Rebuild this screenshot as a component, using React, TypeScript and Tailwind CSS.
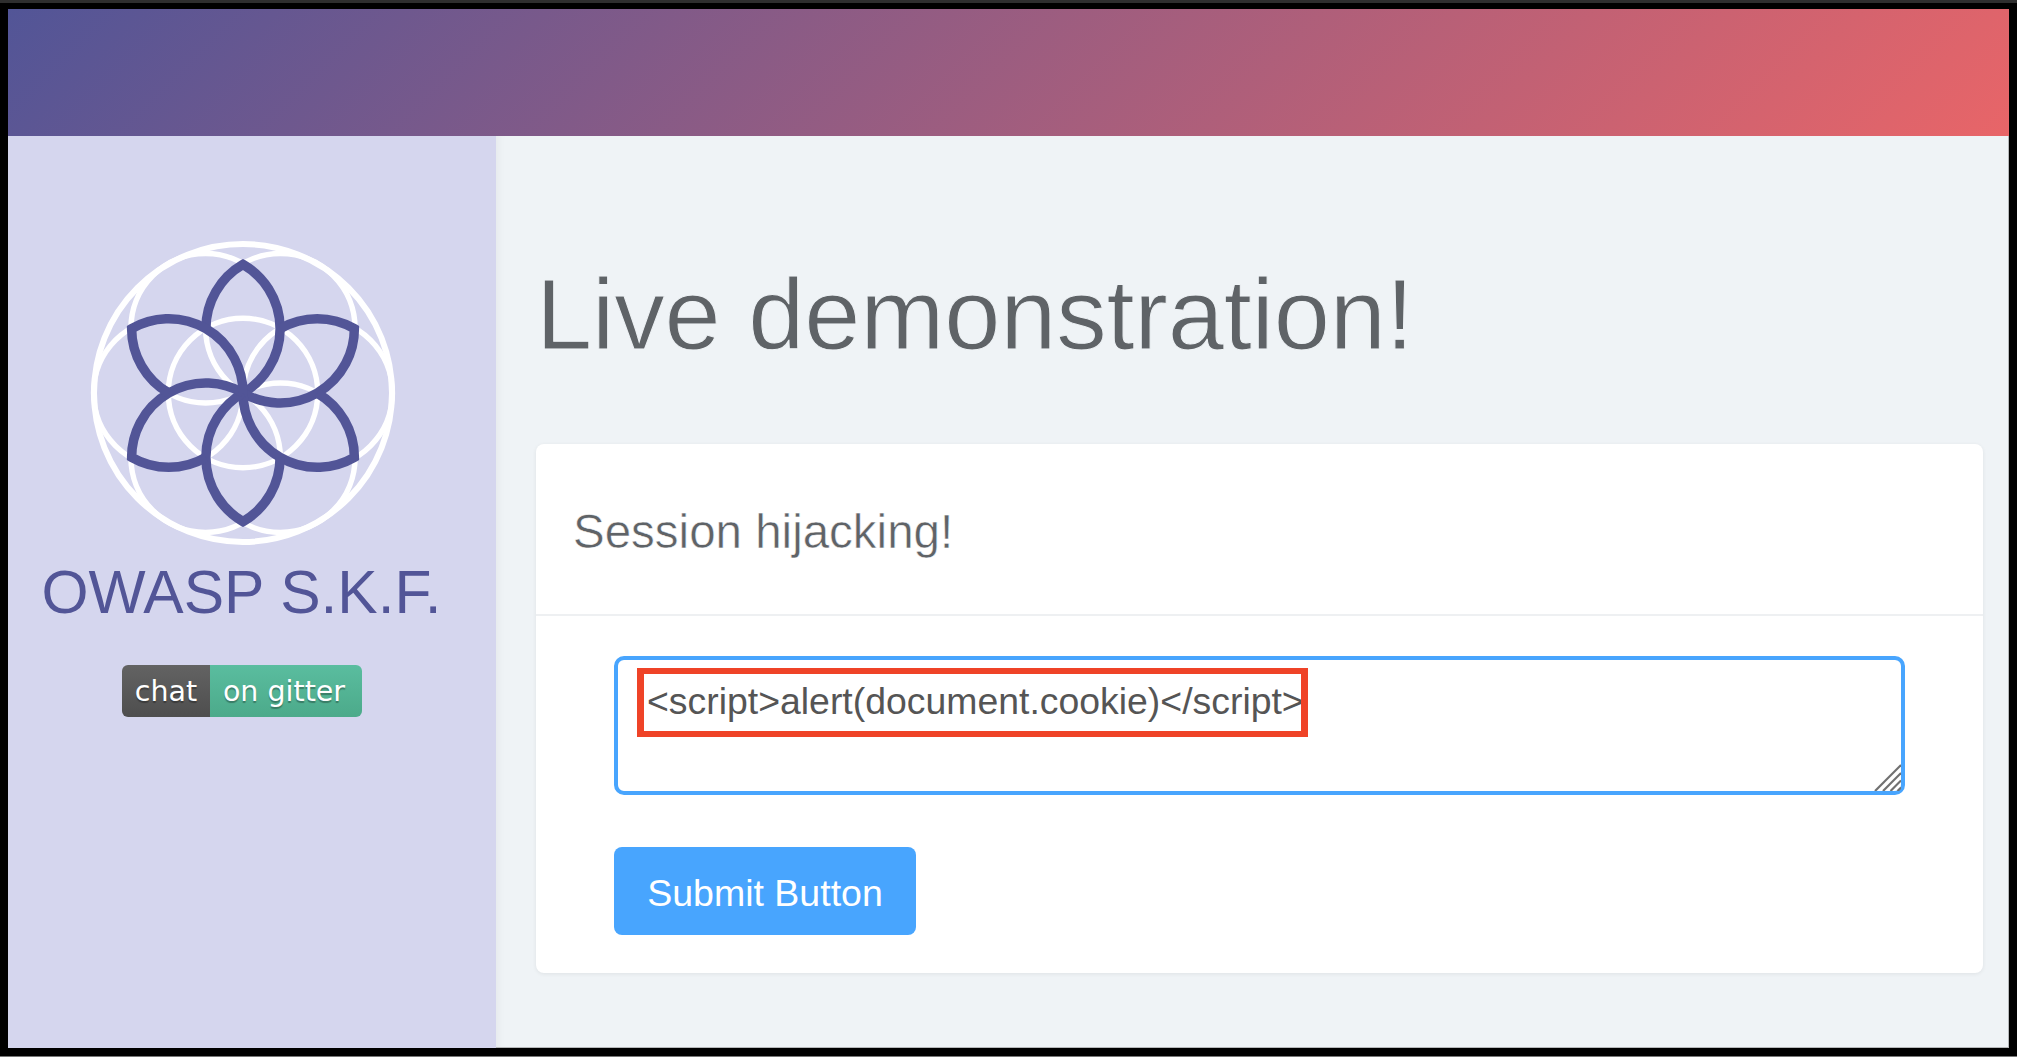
const PETAL = 'M-37.1 -64.3A74.25 74.25 0 0 1 0 -128.6A74.25 74.25 0 0 1 0 0';

const circles = [
  [0, 0],
  [74.7, 0],
  [37.35, 64.7],
  [-37.35, 64.7],
  [-74.7, 0],
  [-37.35, -64.7],
  [37.35, -64.7],
];

function Logo() {
  return (
    <svg width="320" height="320" viewBox="-160 -160 320 320" className="block">
      <g fill="none" stroke="#ffffff" strokeWidth="5.5">
        <circle cx="0" cy="0" r="149" strokeWidth="6" />
        {circles.map(([cx, cy]) => (
          <circle key={`${cx}-${cy}`} cx={cx} cy={cy} r="74.7" />
        ))}
      </g>
      <g fill="none" stroke="#525597" strokeWidth="9.5" strokeMiterlimit="10">
        {[0, 60, 120, 180, 240, 300].map((deg) => (
          <path key={deg} d={PETAL} transform={`rotate(${deg})`} />
        ))}
      </g>
    </svg>
  );
}

function GitterBadge() {
  return (
    <div className="flex h-[52px] w-[240px] overflow-hidden rounded-[6px] font-['DejaVu_Sans',sans-serif] text-[28.5px] leading-[53px] text-white [text-shadow:0_2px_1px_rgba(0,0,0,0.3)]">
      <div className="w-[88px] bg-gradient-to-b from-[#636363] to-[#4e4e4e] text-center">chat</div>
      <div className="flex-1 bg-gradient-to-b from-[#5abd9f] to-[#4caa8a] pr-[4px] text-center">on gitter</div>
    </div>
  );
}

export default function App() {
  return (
    <div className="flex h-[1057px] flex-col border-t-[3px] border-b border-t-[#2e2e2e] border-b-[#777777] bg-black pt-[6px] pr-[8px] pb-[8px] pl-[8px] font-['Liberation_Sans',sans-serif]">
      <header className="h-[127px] shrink-0 bg-[linear-gradient(135deg,#525597,#e86568)]" />

      <div className="flex min-h-0 flex-1">
        <aside className="flex w-[488px] shrink-0 flex-col items-center bg-[#d5d6ee] pt-[97px] pr-[18px]">
          <Logo />
          <div className="mt-[4px] pr-[3px] text-[60.5px] leading-[70px] whitespace-nowrap text-[#525597]">OWASP S.K.F.</div>
          <div className="mt-[38px] pr-[2px]">
            <GitterBadge />
          </div>
        </aside>

        <main className="flex-1 border-r border-b border-[#b5b7b9] bg-[#eff3f6] pt-[118px] pr-[25px] pl-[40px] shadow-[inset_12px_0_12px_-12px_rgba(0,0,0,0.06)]">
          <h1 className="text-[101px] leading-[120px] tracking-[-0.2px] text-[#5f6367] [-webkit-text-stroke:1px_#eff3f6]">Live demonstration!</h1>

          <section className="mt-[70px] h-[529px] rounded-[8px] bg-white shadow-[0_1px_4px_rgba(0,0,0,0.07)]">
            <div className="flex h-[172px] items-center border-b-2 border-[#eef0f2] pt-[5px] pr-[38px] pl-[37px] text-[47.5px] text-[#5f6367] [-webkit-text-stroke:0.5px_#ffffff]">
              Session hijacking!
            </div>
            <div className="px-[78px] pt-[40px]">
              <div className="relative h-[139px]">
                <textarea
                  readOnly
                  defaultValue="<script>alert(document.cookie)</script>"
                  className="block h-full w-full resize-none rounded-[10px] border-4 border-[#48a5fe] bg-white pt-[18px] pr-[30px] pl-[29px] text-[37.4px] leading-[46px] text-[#555555] outline-none"
                />
                <div className="absolute top-[12px] left-[23px] h-[69px] w-[671px] border-x-[7px] border-y-[6px] border-[#ef4327]" />
                <svg width="30" height="30" viewBox="0 0 30 30" className="absolute right-[4px] bottom-[4px]">
                  <g stroke="#707070" strokeWidth="2.2">
                    <path d="M4 30 L30 4" />
                    <path d="M12 30 L30 12" />
                    <path d="M19.5 30 L30 19.5" />
                    <path d="M26.5 30 L30 26.5" />
                  </g>
                </svg>
              </div>
              <button className="mt-[52px] h-[88px] w-[302px] rounded-[8px] bg-[#48a5fe] pt-[4px] text-[37.5px] text-white">
                Submit Button
              </button>
            </div>
          </section>
        </main>
      </div>
    </div>
  );
}
